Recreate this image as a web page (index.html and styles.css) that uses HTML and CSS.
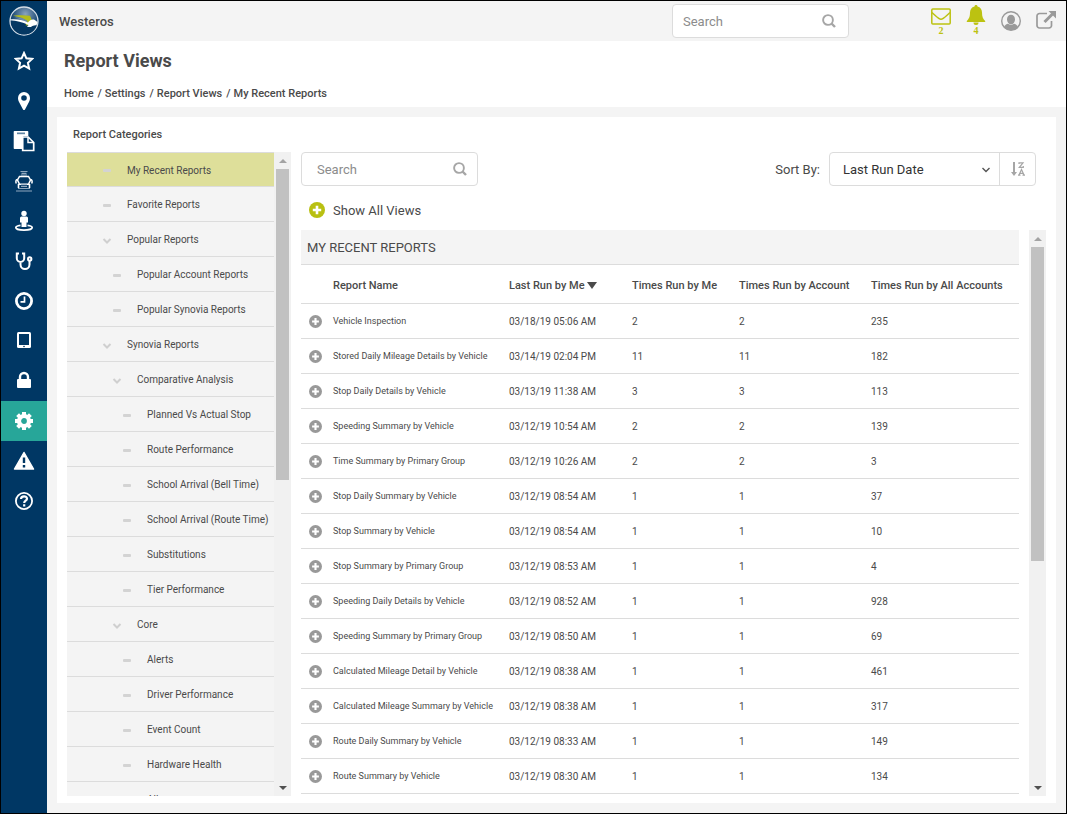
FILE: index.html
```html
<!DOCTYPE html>
<html lang="en">
  <head>
    <meta charset="UTF-8" />
    <meta name="viewport" content="width=device-width, initial-scale=1.0" />
    <title>Report Views</title>
    <link rel="stylesheet" href="styles.css">
  </head>
  <body>
    <svg class="sprite" aria-hidden="true">
      <symbol id="dash" viewBox="0 0 10 10">
        <rect x="1" y="4" width="8" height="3" rx="1" fill="#d3d3d3" />
      </symbol>
      <symbol id="chevron" viewBox="0 0 10 10">
        <path d="M1.500 4 5 7.500l3.500-3.500" fill="none" stroke="#cfcfcf" stroke-width="2" />
      </symbol>
      <symbol id="plus" viewBox="0 0 16 16">
        <circle cx="8" cy="8" r="8" fill="currentColor" />
        <path d="M8 3.800v8.400M3.800 8h8.400" stroke="#fff" stroke-width="2.600" />
      </symbol>
      <symbol id="search" viewBox="0 0 14 14">
        <circle cx="6" cy="6" r="4.900" fill="none" stroke="#a6a6a6" stroke-width="1.900" />
        <path d="m9.500 9.500 3.500 3.500" stroke="#a6a6a6" stroke-width="2.400" />
      </symbol>
    </svg>

    <nav class="sidebar" aria-label="Main">
      <a href="#" class="logo" aria-label="Home">
        <svg width="30" height="30" viewBox="0 0 30 30">
          <defs>
            <radialGradient id="globe" cx="0.55" cy="0.25" r="0.55">
              <stop offset="0" stop-color="#8aa3bd" />
              <stop offset="1" stop-color="#0a3c69" />
            </radialGradient>
          </defs>
          <circle cx="15" cy="15" r="14" fill="url(#globe)" stroke="#d5dee7" stroke-width="1.300" />
          <path d="M2 15.500c8-1 15 0 20 2l6 .5c-1 6-6 10.500-13 10.500S2 23 2 15.500z" fill="#053863" />
          <path d="M4 9.800c7-.8 12-.6 17 0l1.800 4.200-3.800 5.500-2.500-.3 2-3.700c-3-3-8-4.700-14.500-5.700z" fill="#b5bd1a" />
          <path d="M6 11.500c5-.2 9 .8 12.500 3.500l-1 1.500C13 14 10 12.500 6 11.500z" fill="#6d8cab" />
          <path d="M1 13.500c7-.6 12 .4 18 3 1.500-2.500 4-3.500 6-3l3.500 2.500-1 3.500c-2-.5-4 .5-5.500 1.500h-4l1.500-2C13 16 8 14.700 1 14.300z" fill="#fff" />
        </svg>
      </a>
      <a href="#" aria-label="Favorites">
        <svg width="20" height="20" viewBox="0 0 20 20" fill="none" stroke="#fff" stroke-width="2" stroke-linejoin="miter">
          <path d="m10 2 2.400 5.300 5.800.6-4.300 3.900 1.200 5.700L10 14.600l-5.100 2.900 1.200-5.700L1.800 7.900l5.800-.6z" />
        </svg>
      </a>
      <a href="#" aria-label="Map">
        <svg width="20" height="20" viewBox="0 0 20 20" fill="#fff">
          <path fill-rule="evenodd" d="M10 1a6 6 0 0 0-6 6c0 2 .6 3 1.300 4.500L9 18.500c.4.800 1.600.8 2 0l3.700-7C15.400 10 16 9 16 7a6 6 0 0 0-6-6zm0 3.200a2.800 2.800 0 1 1 0 5.600 2.800 2.800 0 0 1 0-5.600z" />
        </svg>
      </a>
      <a href="#" aria-label="Reports">
        <svg width="22" height="22" viewBox="0 0 22 22" fill="#fff">
          <path d="M1.500 1h13a.8.8 0 0 1 .8.800V6H11a1.500 1.500 0 0 0-1.500 1.500V19h-8a.8.8 0 0 1-.8-.8V1.800A.8.8 0 0 1 1.500 1z" />
          <path d="M4 2.500h8v1.700H4z" fill="#5f84a3" />
          <path d="M9.700 7h5.500l5.500 5.500V20.500h-11z" fill="#003764" stroke="#fff" stroke-width="1.700" />
          <path d="M15 7v5.500h5.500" fill="none" stroke="#fff" stroke-width="1.500" />
        </svg>
      </a>
      <a href="#" aria-label="Buses">
        <svg width="20" height="22" viewBox="0 0 20 22" fill="none" stroke="#8fa8be">
          <path d="M6.500 1.500h7M7.500 3.300h5M7 5h6" stroke-width="1.200" />
          <path d="M5.500 6.500h9l2 3.500-2 4.200h-9L3.500 10z" fill="#003764" stroke="#fff" stroke-width="1.500" />
          <path d="M3.500 9.500c-1.800.2-2 2.300-1.200 4M16.500 9.500c1.800.2 2 2.300 1.200 4" stroke="#fff" stroke-width="1.500" />
          <path d="M7 14.700h6M7 16.500h6M4 18.500h12M2 21h16" stroke-width="1.100" />
          <path d="M4.500 14v4M15.500 14v4" stroke="#fff" stroke-width="1.600" />
        </svg>
      </a>
      <a href="#" aria-label="Street view">
        <svg width="20" height="22" viewBox="0 0 20 22" fill="#fff">
          <circle cx="10" cy="3.500" r="2.700" />
          <path d="M7.500 6.500h5a1.500 1.500 0 0 1 1.500 1.500v4.500h-1.500v4.500h-5v-4.500H6V8a1.500 1.500 0 0 1 1.500-1.500z" />
          <path d="M6.500 15.300c-2.800.4-4.700 1.200-4.700 2.200 0 1.500 3.700 2.700 8.200 2.700s8.200-1.200 8.200-2.700c0-1-1.900-1.800-4.700-2.200" fill="none" stroke="#fff" stroke-width="1.700" />
        </svg>
      </a>
      <a href="#" aria-label="Diagnostics">
        <svg width="20" height="20" viewBox="0 0 20 20" fill="none" stroke="#fff" stroke-width="2">
          <path d="M5 2.500H2.800v4.800a3.700 3.700 0 0 0 7.400 0V2.500H8M6.500 11v2.500a4.500 4.500 0 0 0 9 0V10" />
          <circle cx="15.700" cy="8" r="1.700" />
        </svg>
      </a>
      <a href="#" aria-label="History">
        <svg width="20" height="20" viewBox="0 0 20 20" fill="none" stroke="#fff">
          <circle cx="10" cy="10" r="7.600" stroke-width="2.800" />
          <path d="M10.500 5.500v5.300H6.500" stroke-width="1.700" />
        </svg>
      </a>
      <a href="#" aria-label="Devices">
        <svg width="20" height="20" viewBox="0 0 20 20">
          <rect x="3" y="1" width="14" height="16" rx="1.500" fill="#fff" />
          <path d="M5 3h10v11H5z" fill="#003764" />
          <circle cx="10" cy="15.500" r="0.800" fill="#003764" />
        </svg>
      </a>
      <a href="#" aria-label="Security">
        <svg width="20" height="20" viewBox="0 0 20 20">
          <rect x="3" y="8" width="14" height="9" rx="1" fill="#fff" />
          <path d="M6 9V6a4 4 0 0 1 8 0v3" fill="none" stroke="#fff" stroke-width="2.400" />
        </svg>
      </a>
      <a href="#" class="active" aria-label="Settings">
        <svg width="20" height="20" viewBox="0 0 20 20" fill="none" stroke="#fff">
          <circle cx="10" cy="10" r="5" stroke-width="4.200" />
          <path d="M10 1v3M10 16v3M1 10h3M16 10h3M3.600 3.600l2.200 2.200M14.200 14.200l2.200 2.200M3.600 16.400l2.200-2.200M14.200 5.800l2.200-2.200" stroke-width="4" />
        </svg>
      </a>
      <a href="#" aria-label="Alerts">
        <svg width="22" height="20" viewBox="0 0 22 20">
          <path d="M11 1.500 20.500 18h-19z" fill="#fff" stroke="#fff" stroke-width="1.500" stroke-linejoin="round" />
          <path d="M11 6.500v5.500M11 14v2.500" stroke="#003764" stroke-width="2.400" />
        </svg>
      </a>
      <a href="#" aria-label="Help">
        <svg width="20" height="20" viewBox="0 0 20 20" fill="none" stroke="#fff">
          <circle cx="10" cy="10" r="8.100" stroke-width="1.800" />
          <path d="M7 8c0-3.600 6-3.400 6-.3 0 2-2.800 2-2.800 4.300M10.200 13.300v2.200" stroke-width="2.200" />
        </svg>
      </a>
    </nav>

    <div class="page">
      <header class="topbar">
        <span class="account">Westeros</span>
        <label class="search-box">
          <input type="search" placeholder="Search" aria-label="Search site" />
          <svg width="14" height="14"><use href="#search" /></svg>
        </label>
        <div class="tools">
          <button type="button" class="notice" aria-label="Messages">
            <svg width="20" height="17" viewBox="0 0 20 17" fill="none" stroke="#bcc211" stroke-width="1.500">
              <rect x="0.800" y="1" width="18.400" height="15" rx="1" />
              <path d="M1 4.500c4 3.500 6.500 6.800 9 6.800s5-3.300 9-6.800" />
            </svg>
            <span>2</span>
          </button>
          <button type="button" class="notice" aria-label="Notifications">
            <svg width="20" height="20" viewBox="0 0 20 20" fill="#bcc211">
              <path d="M10 0c1 0 1.500.7 1.500 1.500C14.500 2.200 16 4.500 16 7.500c0 4.500 1.200 6.500 3.200 8.500v1H.8v-1C2.800 14 4 12 4 7.500c0-3 1.500-5.300 4.500-6C8.500.7 9 0 10 0z" />
              <path d="M7.500 17.500h5a2.500 2.500 0 0 1-5 0z" />
            </svg>
            <span>4</span>
          </button>
          <button type="button" aria-label="Profile">
            <svg width="20" height="20" viewBox="0 0 20 20">
              <circle cx="10" cy="10" r="9.300" fill="none" stroke="#9a9a9a" stroke-width="1.400" />
              <ellipse cx="10" cy="8.500" rx="4" ry="4.800" fill="#9a9a9a" />
              <path d="M3 16c.8-2.200 2.500-3 4-3.300 1.800 1.500 4.200 1.500 6 0 1.500.3 3.200 1.100 4 3.300-3.500 4.300-10.500 4.300-14 0z" fill="#9a9a9a" />
            </svg>
          </button>
          <button type="button" aria-label="Log out">
            <svg width="20" height="20" viewBox="0 0 20 20" fill="none" stroke="#9a9a9a">
              <path d="M11 2.500H3.500A2.500 2.500 0 0 0 1 5v9.500A2.500 2.500 0 0 0 3.500 17H13a2.500 2.500 0 0 0 2.500-2.500V10" stroke-width="1.700" />
              <path d="M8.500 11 17 2.500" stroke-width="3" />
              <path d="M12.500 0H20v7.500z" fill="#9a9a9a" stroke="none" />
            </svg>
          </button>
        </div>
      </header>

      <div class="page-head">
        <h1>Report Views</h1>
        <nav class="breadcrumb" aria-label="Breadcrumb">
          <a href="#">Home</a><span>/</span><a href="#">Settings</a><span>/</span><a href="#">Report Views</a><span>/</span><a href="#">My Recent Reports</a>
        </nav>
      </div>

      <main class="content">
        <div class="panel">
          <section class="categories">
            <h2>Report Categories</h2>
            <div class="scroller">
              <ul class="tree">
                <li class="selected"><a href="#"><svg><use href="#dash" /></svg>My Recent Reports</a></li>
                <li><a href="#"><svg><use href="#dash" /></svg>Favorite Reports</a></li>
                <li><a href="#"><svg><use href="#chevron" /></svg>Popular Reports</a></li>
                <li class="level-2"><a href="#"><svg><use href="#dash" /></svg>Popular Account Reports</a></li>
                <li class="level-2"><a href="#"><svg><use href="#dash" /></svg>Popular Synovia Reports</a></li>
                <li><a href="#"><svg><use href="#chevron" /></svg>Synovia Reports</a></li>
                <li class="level-2"><a href="#"><svg><use href="#chevron" /></svg>Comparative Analysis</a></li>
                <li class="level-3"><a href="#"><svg><use href="#dash" /></svg>Planned Vs Actual Stop</a></li>
                <li class="level-3"><a href="#"><svg><use href="#dash" /></svg>Route Performance</a></li>
                <li class="level-3"><a href="#"><svg><use href="#dash" /></svg>School Arrival (Bell Time)</a></li>
                <li class="level-3"><a href="#"><svg><use href="#dash" /></svg>School Arrival (Route Time)</a></li>
                <li class="level-3"><a href="#"><svg><use href="#dash" /></svg>Substitutions</a></li>
                <li class="level-3"><a href="#"><svg><use href="#dash" /></svg>Tier Performance</a></li>
                <li class="level-2"><a href="#"><svg><use href="#chevron" /></svg>Core</a></li>
                <li class="level-3"><a href="#"><svg><use href="#dash" /></svg>Alerts</a></li>
                <li class="level-3"><a href="#"><svg><use href="#dash" /></svg>Driver Performance</a></li>
                <li class="level-3"><a href="#"><svg><use href="#dash" /></svg>Event Count</a></li>
                <li class="level-3"><a href="#"><svg><use href="#dash" /></svg>Hardware Health</a></li>
                <li class="level-3"><a href="#"><svg><use href="#dash" /></svg>All</a></li>
              </ul>
              <div class="scrollbar" aria-hidden="true">
                <span class="arrow up"></span>
                <span class="track"><span class="thumb"></span></span>
                <span class="arrow down"></span>
              </div>
            </div>
          </section>

          <section class="reports">
            <div class="toolbar">
              <label class="search-box">
                <input type="search" placeholder="Search" aria-label="Search reports" />
                <svg width="14" height="14"><use href="#search" /></svg>
              </label>
              <div class="sort">
                <label for="sortBy">Sort By:</label>
                <div class="sort-group">
                  <div class="select-wrap">
                    <select id="sortBy">
                      <option>Last Run Date</option>
                    </select>
                    <svg width="10" height="10" viewBox="0 0 10 10" fill="none" stroke="#555" stroke-width="1.400">
                      <path d="M1.500 3 5 6.500 8.500 3" />
                    </svg>
                  </div>
                  <button type="button" aria-label="Sort descending">
                    <svg width="14" height="14" viewBox="0 0 14 14" fill="none" stroke="#a6a6a6">
                      <path d="M3 0v11" stroke-width="2" />
                      <path d="M0 10h6l-3 4z" fill="#a6a6a6" stroke="none" />
                      <path d="M8 2V.8h4L8.300 5.300h4V4" stroke-width="1.200" />
                      <path d="m8 13 2.500-5.500L13 13M8.800 11.300h3.400M7 13.200h2.500M11.500 13.200H14" stroke-width="1.200" />
                    </svg>
                  </button>
                </div>
              </div>
            </div>

            <button type="button" class="show-all">
              <svg width="16" height="16"><use href="#plus" /></svg>
              Show All Views
            </button>

            <div class="scroller spaced">
              <div class="report-list">
                <h3>MY RECENT REPORTS</h3>
                <table>
                  <colgroup>
                    <col class="col-icon" />
                    <col class="col-name" />
                    <col class="col-date" />
                    <col class="col-me" />
                    <col class="col-account" />
                    <col />
                  </colgroup>
                  <thead>
                    <tr>
                      <th></th>
                      <th>Report Name</th>
                      <th>Last Run by Me<span class="sort-mark"></span></th>
                      <th>Times Run by Me</th>
                      <th>Times Run by Account</th>
                      <th>Times Run by All Accounts</th>
                    </tr>
                  </thead>
                  <tbody>
                    <tr><td><svg><use href="#plus" /></svg></td><td>Vehicle Inspection</td><td>03/18/19 05:06 AM</td><td>2</td><td>2</td><td>235</td></tr>
                    <tr><td><svg><use href="#plus" /></svg></td><td>Stored Daily Mileage Details by Vehicle</td><td>03/14/19 02:04 PM</td><td>11</td><td>11</td><td>182</td></tr>
                    <tr><td><svg><use href="#plus" /></svg></td><td>Stop Daily Details by Vehicle</td><td>03/13/19 11:38 AM</td><td>3</td><td>3</td><td>113</td></tr>
                    <tr><td><svg><use href="#plus" /></svg></td><td>Speeding Summary by Vehicle</td><td>03/12/19 10:54 AM</td><td>2</td><td>2</td><td>139</td></tr>
                    <tr><td><svg><use href="#plus" /></svg></td><td>Time Summary by Primary Group</td><td>03/12/19 10:26 AM</td><td>2</td><td>2</td><td>3</td></tr>
                    <tr><td><svg><use href="#plus" /></svg></td><td>Stop Daily Summary by Vehicle</td><td>03/12/19 08:54 AM</td><td>1</td><td>1</td><td>37</td></tr>
                    <tr><td><svg><use href="#plus" /></svg></td><td>Stop Summary by Vehicle</td><td>03/12/19 08:54 AM</td><td>1</td><td>1</td><td>10</td></tr>
                    <tr><td><svg><use href="#plus" /></svg></td><td>Stop Summary by Primary Group</td><td>03/12/19 08:53 AM</td><td>1</td><td>1</td><td>4</td></tr>
                    <tr><td><svg><use href="#plus" /></svg></td><td>Speeding Daily Details by Vehicle</td><td>03/12/19 08:52 AM</td><td>1</td><td>1</td><td>928</td></tr>
                    <tr><td><svg><use href="#plus" /></svg></td><td>Speeding Summary by Primary Group</td><td>03/12/19 08:50 AM</td><td>1</td><td>1</td><td>69</td></tr>
                    <tr><td><svg><use href="#plus" /></svg></td><td>Calculated Mileage Detail by Vehicle</td><td>03/12/19 08:38 AM</td><td>1</td><td>1</td><td>461</td></tr>
                    <tr><td><svg><use href="#plus" /></svg></td><td>Calculated Mileage Summary by Vehicle</td><td>03/12/19 08:38 AM</td><td>1</td><td>1</td><td>317</td></tr>
                    <tr><td><svg><use href="#plus" /></svg></td><td>Route Daily Summary by Vehicle</td><td>03/12/19 08:33 AM</td><td>1</td><td>1</td><td>149</td></tr>
                    <tr><td><svg><use href="#plus" /></svg></td><td>Route Summary by Vehicle</td><td>03/12/19 08:30 AM</td><td>1</td><td>1</td><td>134</td></tr>
                  </tbody>
                </table>
              </div>
              <div class="scrollbar" aria-hidden="true">
                <span class="arrow up"></span>
                <span class="track"><span class="thumb long"></span></span>
                <span class="arrow down"></span>
              </div>
            </div>
          </section>
        </div>
      </main>
    </div>
  </body>
</html>
```
FILE: styles.css
```css
* {
  box-sizing: border-box;
}
body {
  margin: 0;
  height: 100vh;
  display: flex;
  border: 1px solid #000;
  background-color: #f4f4f4;
  color: #4a4a4a;
  font-family: Roboto, sans-serif;
  font-size: 10px;
  overflow: hidden;
}
h1,
h2,
h3,
ul {
  margin: 0;
  padding: 0;
}
a {
  color: inherit;
  text-decoration: none;
}
button {
  padding: 0;
  border: none;
  background: none;
  color: inherit;
  font-family: inherit;
  cursor: pointer;
}
svg {
  display: block;
  flex-shrink: 0;
}
.sprite {
  position: absolute;
  width: 0;
  height: 0;
}

/* sidebar */
.sidebar {
  width: 46px;
  flex-shrink: 0;
  background-color: #003764;
}
.sidebar a {
  height: 40px;
  display: flex;
  align-items: center;
  justify-content: center;
}
.sidebar a.active {
  background-color: #27a699;
}

/* top */
.page {
  flex: 1;
  min-width: 0;
  display: flex;
  flex-direction: column;
}
.topbar {
  height: 40px;
  flex-shrink: 0;
  display: flex;
  align-items: center;
  padding: 0 10px 0 12px;
}
.account {
  flex: 1;
  font-size: 13px;
  font-weight: 500;
}
.search-box {
  width: 177px;
  height: 34px;
  display: flex;
  align-items: center;
  padding: 0 12px 0 10px;
  border: 1px solid #dcdcdc;
  border-radius: 4px;
  background-color: #fff;
}
.search-box input {
  flex: 1;
  min-width: 0;
  padding: 0;
  border: none;
  outline: none;
  background: none;
  color: #4a4a4a;
  font-family: inherit;
  font-size: 13px;
}
.search-box input::placeholder {
  color: #8c8c8c;
}
.tools {
  display: flex;
  align-items: center;
  gap: 15px;
  margin-left: 82px;
}
.notice {
  height: 32px;
  display: flex;
  flex-direction: column;
  align-items: center;
  justify-content: flex-end;
}
.notice span {
  color: #bcc211;
  font-family: "Liberation Serif", serif;
  font-size: 10px;
  font-weight: bold;
  line-height: 12px;
}
.page-head {
  height: 66px;
  flex-shrink: 0;
  padding: 8px 17px 0;
  background-color: #fff;
}
h1 {
  font-size: 18px;
  font-weight: 700;
  line-height: 24px;
}
.breadcrumb {
  margin-top: 12px;
  font-size: 11px;
  font-weight: 500;
  line-height: 18px;
}
.breadcrumb span {
  padding: 0 3px 0 4px;
}

/* panel */
.content {
  flex: 1;
  min-height: 0;
  display: flex;
  padding: 10px;
}
.panel {
  flex: 1;
  min-width: 0;
  display: flex;
  gap: 10px;
  padding: 0 10px 7px;
  background-color: #fff;
}
.categories {
  width: 224px;
  flex-shrink: 0;
  display: flex;
  flex-direction: column;
}
h2 {
  padding-left: 6px;
  font-size: 11px;
  font-weight: 500;
  line-height: 35px;
}
.scroller {
  flex: 1;
  min-height: 0;
  display: flex;
}
.spaced {
  gap: 10px;
}
.tree {
  flex: 1;
  overflow: hidden;
  list-style: none;
  background-color: #f4f4f4;
}
.tree li {
  height: 35px;
  padding-left: 35px;
  border-bottom: 1px solid #dcdcdc;
}
.tree li.level-2 {
  padding-left: 45px;
}
.tree li.level-3 {
  padding-left: 55px;
}
.tree li.selected {
  border-top: 1px solid #dcdcdc;
  background-color: #dedf9a;
}
.tree a {
  height: 100%;
  display: flex;
  align-items: center;
  gap: 15px;
  padding-top: 1px;
  white-space: nowrap;
}
.tree svg {
  width: 10px;
  height: 10px;
}

.scrollbar {
  width: 17px;
  flex-shrink: 0;
  display: flex;
  flex-direction: column;
  background-color: #f1f1f1;
}
.arrow {
  height: 17px;
  display: flex;
  align-items: center;
  justify-content: center;
}
.arrow::before {
  content: "";
  border: 4px solid transparent;
}
.arrow.up::before {
  border-top: none;
  border-bottom-color: #a3a3a3;
}
.arrow.down::before {
  border-bottom: none;
  border-top-color: #505050;
}
.track {
  flex: 1;
  padding: 0 2px;
}
.thumb {
  display: block;
  height: 51%;
  background-color: #c1c1c1;
}
.thumb.long {
  height: 59%;
}

/* reports */
.reports {
  flex: 1;
  min-width: 0;
  display: flex;
  flex-direction: column;
  padding-top: 35px;
}
.toolbar {
  display: flex;
  justify-content: space-between;
  padding-right: 10px;
}
.toolbar .search-box {
  padding-left: 15px;
  padding-right: 10px;
}
.sort {
  display: flex;
  align-items: center;
  gap: 9px;
  font-size: 13px;
}
.sort-group {
  display: flex;
  height: 34px;
  border: 1px solid #dcdcdc;
  border-radius: 4px;
}
.select-wrap {
  position: relative;
  width: 170px;
  border-right: 1px solid #dcdcdc;
}
.select-wrap select {
  width: 100%;
  height: 100%;
  padding: 0 13px;
  border: none;
  outline: none;
  appearance: none;
  background: none;
  color: #333;
  font-family: inherit;
  font-size: 13px;
}
.select-wrap svg {
  position: absolute;
  top: 12px;
  right: 8px;
  pointer-events: none;
}
.sort-group button {
  width: 35px;
  display: flex;
  align-items: center;
  justify-content: center;
}
.show-all {
  align-self: flex-start;
  height: 44px;
  display: flex;
  align-items: center;
  gap: 8px;
  padding: 4px 8px 0;
  font-size: 13px;
}
.show-all svg {
  color: #b9c012;
}
.report-list {
  flex: 1;
  min-width: 0;
  overflow: hidden;
}
h3 {
  padding: 1px 0 0 6px;
  border-bottom: 1px solid #dcdcdc;
  background-color: #f4f4f4;
  font-size: 13px;
  font-weight: 400;
  line-height: 33px;
}
table {
  width: 100%;
  table-layout: fixed;
  border-collapse: separate;
  border-spacing: 0;
}
.col-icon {
  width: 32px;
}
.col-name {
  width: 176px;
}
.col-date {
  width: 123px;
}
.col-me {
  width: 107px;
}
.col-account {
  width: 132px;
}
th,
td {
  padding: 0;
  border-bottom: 1px solid #dcdcdc;
  text-align: left;
  white-space: nowrap;
}
th {
  height: 39px;
  padding-top: 2px;
  font-size: 11px;
  font-weight: 500;
}
td {
  height: 35px;
  font-size: 10px;
}
td:nth-child(2) {
  font-size: 9px;
}
td svg {
  width: 13px;
  height: 13px;
  margin-left: 8px;
  color: #999;
}
.sort-mark {
  display: inline-block;
  margin-left: 2px;
  border: 5px solid transparent;
  border-top: 7px solid #4a4a4a;
  border-bottom: none;
}
```
